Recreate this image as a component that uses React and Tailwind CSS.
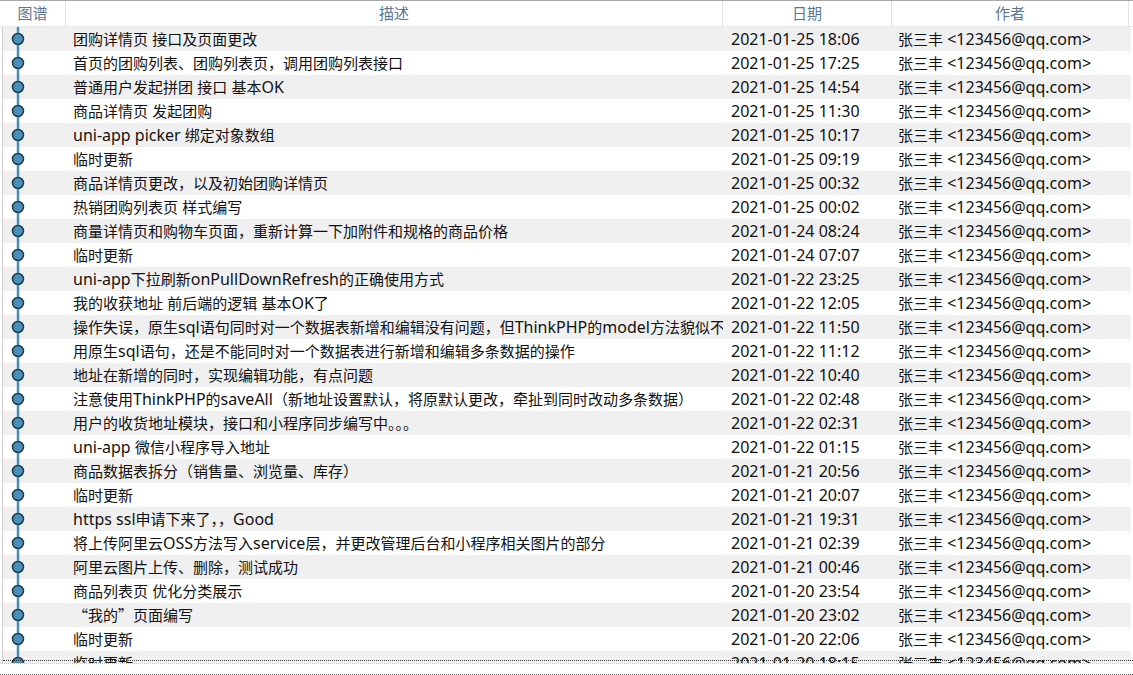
import React from "react";

const commits = [
  ["团购详情页 接口及页面更改", "2021-01-25 18:06"],
  ["首页的团购列表、团购列表页，调用团购列表接口", "2021-01-25 17:25"],
  ["普通用户发起拼团 接口 基本OK", "2021-01-25 14:54"],
  ["商品详情页 发起团购", "2021-01-25 11:30"],
  ["uni-app picker 绑定对象数组", "2021-01-25 10:17"],
  ["临时更新", "2021-01-25 09:19"],
  ["商品详情页更改，以及初始团购详情页", "2021-01-25 00:32"],
  ["热销团购列表页 样式编写", "2021-01-25 00:02"],
  ["商量详情页和购物车页面，重新计算一下加附件和规格的商品价格", "2021-01-24 08:24"],
  ["临时更新", "2021-01-24 07:07"],
  ["uni-app下拉刷新onPullDownRefresh的正确使用方式", "2021-01-22 23:25"],
  ["我的收获地址 前后端的逻辑 基本OK了", "2021-01-22 12:05"],
  ["操作失误，原生sql语句同时对一个数据表新增和编辑没有问题，但ThinkPHP的model方法貌似不行", "2021-01-22 11:50"],
  ["用原生sql语句，还是不能同时对一个数据表进行新增和编辑多条数据的操作", "2021-01-22 11:12"],
  ["地址在新增的同时，实现编辑功能，有点问题", "2021-01-22 10:40"],
  ["注意使用ThinkPHP的saveAll（新地址设置默认，将原默认更改，牵扯到同时改动多条数据）", "2021-01-22 02:48"],
  ["用户的收货地址模块，接口和小程序同步编写中。。。", "2021-01-22 02:31"],
  ["uni-app 微信小程序导入地址", "2021-01-22 01:15"],
  ["商品数据表拆分（销售量、浏览量、库存）", "2021-01-21 20:56"],
  ["临时更新", "2021-01-21 20:07"],
  ["https ssl申请下来了，，Good", "2021-01-21 19:31"],
  ["将上传阿里云OSS方法写入service层，并更改管理后台和小程序相关图片的部分", "2021-01-21 02:39"],
  ["阿里云图片上传、删除，测试成功", "2021-01-21 00:46"],
  ["商品列表页 优化分类展示", "2021-01-20 23:54"],
  ["\u201c我的\u201d页面编写", "2021-01-20 23:02"],
  ["临时更新", "2021-01-20 22:06"],
  ["临时更新", "2021-01-20 18:15"],
];

// latin runs render a bit larger so they get the width of the original UI font
function Mixed({ text }) {
  const parts = text.split(/([\x20-\x7e]+)/);
  return parts.map((p, i) =>
    /^[\x20-\x7e]+$/.test(p) ? (
      <span key={i} className="text-[16px]">{p}</span>
    ) : p.includes("\u201c") ? (
      <span key={i} lang="zh-CN" style={{ fontFamily: '"Noto Sans CJK SC", sans-serif' }}>{p}</span>
    ) : (
      <span key={i}>{p}</span>
    )
  );
}

function Node() {
  return (
    <svg width="63" height="24" viewBox="0 0 63 24" className="block">
      <line x1="15" y1="0" x2="15" y2="24" stroke="#4a8fb8" strokeWidth="2.5" />
      <circle cx="15" cy="12" r="5.5" fill="#4a8fb8" stroke="#1d3b4d" strokeWidth="1.5" />
    </svg>
  );
}

export default function App() {
  return (
    <div
      className="w-[1133px] h-[675px] bg-white overflow-hidden text-[15px] text-[#111]"
      style={{ fontFamily: '"Noto Sans", "Noto Sans CJK SC", sans-serif' }}
    >
      <div className="flex h-[27px] border-t border-[#a8a8a8] border-b border-b-[#e8e8e8] text-[#5b7796]">
        <div className="w-[66px] flex items-center justify-center border-r border-[#e3e3e3]">图谱</div>
        <div className="w-[657px] flex items-center justify-center border-r border-[#e3e3e3]">描述</div>
        <div className="w-[169px] flex items-center justify-center border-r border-[#e3e3e3]">日期</div>
        <div className="w-[237px] flex items-center justify-center border-r border-[#e3e3e3]">作者</div>
      </div>

      <div className="relative ml-[2px] h-[636px] overflow-hidden border-l border-[#cfcfcf]">
        {commits.map(([msg, date], i) => (
          <div key={i} className={"flex h-[24px] w-[1128px] items-center " + (i % 2 === 0 ? "bg-[#f0f0f0]" : "bg-white")}>
            <div className="w-[63px] shrink-0">
              <Node />
            </div>
            <div className="w-[657px] shrink-0 pl-[7px] pr-[7px] overflow-hidden whitespace-nowrap">
              <Mixed text={msg} />
            </div>
            <div className="w-[169px] shrink-0 pl-[8px] whitespace-nowrap">
              <Mixed text={date} />
            </div>
            <div className="w-[237px] shrink-0 pl-[6px] whitespace-nowrap">
              <Mixed text="张三丰 <123456@qq.com>" />
            </div>
          </div>
        ))}
        <div className="absolute left-0 right-0 top-[633px] border-t border-dotted border-[#333]"></div>
      </div>
      <div className="h-[12px] border-t border-[#c8c8c8] border-b border-b-[#555] border-dotted"></div>
    </div>
  );
}
